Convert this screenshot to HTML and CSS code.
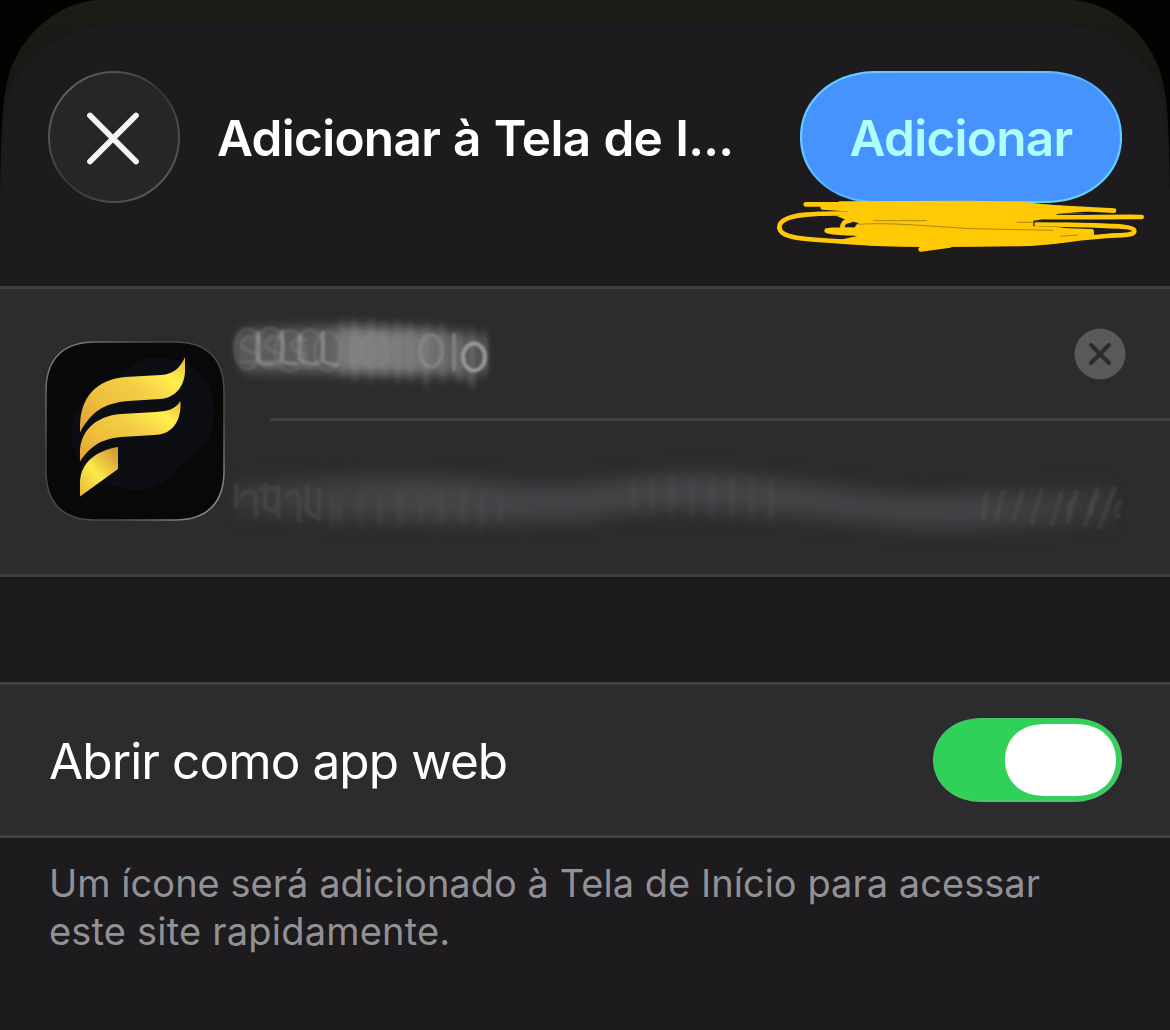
FILE: index.html
```html
<!DOCTYPE html>
<html lang="pt-BR">
<head>
<meta charset="utf-8">
<title>Adicionar à Tela de Início</title>
<link rel="stylesheet" href="styles.css">
</head>
<body>
<main class="sheet">
  <svg class="sheet-edge" viewBox="0 0 1170 200" aria-hidden="true">
    <defs>
      <linearGradient id="rim" x1="0" y1="0" x2="0" y2="1">
        <stop offset="0" stop-color="#1a1c16"/>
        <stop offset=".35" stop-color="#171a14"/>
        <stop offset="1" stop-color="#1d1b1e"/>
      </linearGradient>
      <filter id="soften" color-interpolation-filters="sRGB"><feGaussianBlur stdDeviation="1.3"/></filter>
    </defs>
    <path fill="#010300" d="M0 0H1170V200H0Z"/>
    <path fill="url(#rim)" d="M0 200C1 125 2 91 12 66C26 31 58 4 96 0H1074C1112 4 1144 31 1158 66C1168 91 1169 125 1170 200Z"/>
    <path fill="#1d1b1e" filter="url(#soften)" d="M2 230C3 130 4 92 19 74C39 47 67 28 108 24H1062C1103 28 1131 47 1151 74C1166 92 1167 130 1168 230Z"/>
  </svg>

  <header class="bar">
    <button class="close" aria-label="Fechar">
      <svg viewBox="0 0 132 132">
        <defs>
          <linearGradient id="ring" x1=".1" y1=".1" x2=".9" y2=".9">
            <stop offset="0" stop-color="#606064"/><stop offset=".35" stop-color="#454548"/>
            <stop offset=".5" stop-color="#343438"/><stop offset=".75" stop-color="#48484b"/><stop offset="1" stop-color="#5a5a5d"/>
          </linearGradient>
        </defs>
        <circle cx="66" cy="66" r="65" fill="#262528" stroke="url(#ring)" stroke-width="2"/>
        <path d="M42 44.500L88 90.500M88 44.500L42 90.500" stroke="#f5f5f7" stroke-width="5.800" stroke-linecap="round"/>
      </svg>
    </button>
    <h1 class="title">Adicionar à Tela de I...</h1>
    <button class="add">
      <svg class="add-shape" viewBox="0 0 322 132" aria-hidden="true">
        <defs>
          <linearGradient id="blueRim" x1="0" y1="0" x2="1" y2="1">
            <stop offset="0" stop-color="#65d0ff"/><stop offset=".35" stop-color="#62c9ff"/>
            <stop offset=".5" stop-color="#55abff"/><stop offset=".7" stop-color="#60caff"/><stop offset="1" stop-color="#65d5ff"/>
          </linearGradient>
        </defs>
        <path d="M78 1H244C293 1 321 32 321 66S293 131 244 131H78C29 131 1 100 1 66S29 1 78 1Z" fill="#4693fe" stroke="url(#blueRim)" stroke-width="2.200"/>
      </svg>
      <span class="add-label">Adicionar</span>
      <svg class="scribble" viewBox="0 0 380 60" aria-hidden="true">
        <g transform="translate(-4 -7) scale(.33333)" fill="none" stroke="#ffc905" stroke-width="14" stroke-linecap="round" stroke-linejoin="round">
          <path stroke="none" fill="#ffc905" d="M205 34L600 32L760 36L900 50L1000 60L860 72V80L790 92V108L870 112L960 126L930 148L850 162L750 168H440L300 166L190 154L262 138L262 116L290 104L235 92L200 78L245 70L225 60Z"/>
          <path d="M107 43H400M158 52L300 62"/>
          <path d="M300 72C150 68 28 68 28 112C28 150 120 148 300 160C400 165 600 164 750 162C860 160 900 145 1010 138C1070 134 1093 136 1093 122C1093 105 960 106 800 102"/>
          <path d="M242 91C211 94 216 116 219 129M290 102C258 103 261 114 254 130M170 122C190 115 230 120 300 120M170 122C185 130 230 128 300 134"/>
          <path d="M452 178L540 166M700 44L1032 62M780 80C910 84 1000 80 1115 81"/>
          <path d="M850 120L965 124V132L880 148"/>
        </g>
        <path transform="translate(-4 -7) scale(.33333)" d="M265 103C330 98 420 104 480 108L600 116L850 121M310 92H470M740 97H880M880 71H940M870 139L925 135" fill="none" stroke="#806914" stroke-width="2"/>
      </svg>
    </button>
  </header>

  <section class="details">
    <svg class="app-icon" viewBox="0 0 180 180" aria-hidden="true">
      <defs>
        <linearGradient id="gold" x1="0" y1="1" x2="1" y2="0">
          <stop offset="0" stop-color="#dfa032"/><stop offset=".3" stop-color="#eebe3c"/>
          <stop offset=".55" stop-color="#f3cd45"/><stop offset=".8" stop-color="#fff04d"/><stop offset="1" stop-color="#e6b735"/>
        </linearGradient>
        <linearGradient id="goldFoot" x1="0" y1="1" x2=".8" y2="0">
          <stop offset="0" stop-color="#e9b63a"/><stop offset=".5" stop-color="#fbe94a"/><stop offset="1" stop-color="#d69b36"/>
        </linearGradient>
        <linearGradient id="iconRim" x1="0" y1="0" x2="1" y2="1">
          <stop offset="0" stop-color="#88888a"/><stop offset=".3" stop-color="#48484a"/>
          <stop offset=".7" stop-color="#4a4a4c"/><stop offset="1" stop-color="#a0a0a1"/>
        </linearGradient>
      </defs>
      <path d="M50 1H130C162 1 179 18 179 50V130C179 162 162 179 130 179H50C18 179 1 162 1 130V50C1 18 18 1 50 1Z" fill="#080808" stroke="url(#iconRim)" stroke-width="1.500"/>
      <path d="M26 92C27 70 43 51 67 44C88 16 112 12 133 20C157 27 170 47 169 72C168 96 157 112 138 121C124 143 101 154 76 147C47 141 27 120 26 92Z" fill="#0d0e14"/>
      <path fill="url(#gold)" d="M35 91.500V84C36 57 50 39 80 36L116 34C129 33 135 27 140 16V31C139 46 130 57 115 58L83 60C59 62 46 71 35 91.500Z"/>
      <path fill="url(#gold)" d="M35 120.500V108C37 90 50 75 76 73L111 71C124 70 130 68 135.500 60V65C135 83 125 94 109 94L76 96C55 98 45 106 35 120.500Z"/>
      <path fill="url(#goldFoot)" d="M35 155.500V140C36 122 50 110 73 106V128Z"/>
    </svg>
    <div class="fields">
      <div class="field name-field">
        <svg class="smudge name-smudge" viewBox="0 0 290 100" aria-hidden="true">
          <defs>
            <filter id="smear" x="-20%" y="-40%" width="140%" height="180%" color-interpolation-filters="sRGB"><feGaussianBlur stdDeviation="3 6"/></filter>
            <filter id="ghost" x="-5%" y="-20%" width="110%" height="140%" color-interpolation-filters="sRGB"><feGaussianBlur stdDeviation="1.100"/></filter>
            <filter id="streak" x="-10%" y="-30%" width="120%" height="160%" color-interpolation-filters="sRGB"><feGaussianBlur stdDeviation="2.200 6"/></filter>
            <linearGradient id="nameFade"><stop offset="0" stop-color="#777" stop-opacity=".6"/><stop offset=".38" stop-color="#777" stop-opacity=".7"/><stop offset=".46" stop-color="#8a8a8a" stop-opacity=".9"/><stop offset=".75" stop-color="#888" stop-opacity=".8"/><stop offset="1" stop-color="#777" stop-opacity=".45"/></linearGradient>
          </defs>
          <path d="M15 28Q17 18 40 18L120 15L210 18L262 24Q269 28 268 58L252 69L230 64L30 61Q14 61 15 28Z" fill="url(#nameFade)" filter="url(#smear)"/>
          <path d="M122 12V64M134 10V67M151 10V68M164 14V66M178 12V69M190 14V68M206 16V75M222 15V68M239 22V68M252 20V77M265 23V64" fill="none" stroke="#8b8b8b" stroke-opacity=".3" stroke-width="5" filter="url(#streak)"/>
          <g fill="none" stroke="#a0a0a0" stroke-opacity=".18" stroke-width="4" filter="url(#ghost)">
            <ellipse cx="28" cy="38" rx="13" ry="20"/><ellipse cx="50" cy="37" rx="14" ry="20"/><ellipse cx="70" cy="40" rx="15" ry="20"/><ellipse cx="90" cy="38" rx="13" ry="19"/><ellipse cx="108" cy="40" rx="13" ry="19"/>
            <path d="M41 29Q30 22 23 30C16 42 39 38 37 48Q33 54 20 50M65 29Q54 22 47 30C40 42 63 38 61 48Q55 54 44 50M88 29Q75 25 72 33C69 43 88 39 86 48"/>
            <path d="M38 20V49Q44 55 54 52M62 19V50Q68 53 78 53M80 23V48Q86 54 98 52M103 20V50Q110 54 119 54" stroke-opacity=".5"/>
            <ellipse cx="155" cy="39" rx="14" ry="17" stroke-opacity=".12"/><ellipse cx="211" cy="40" rx="11" ry="16" stroke-opacity=".35"/>
            <path d="M234 22V60" stroke-opacity=".5"/><ellipse cx="254" cy="46" rx="11" ry="13.500" stroke-opacity=".9"/>
          </g>
        </svg>
        <button class="clear" aria-label="Limpar">
          <svg viewBox="0 0 52 52"><circle cx="26" cy="26" r="25.500" fill="#59595c"/><path d="M17 17L35 35M35 17L17 35" stroke="#2c2c2e" stroke-width="4" stroke-linecap="round"/></svg>
        </button>
      </div>
      <div class="field url-field">
        <svg class="smudge url-smudge" viewBox="0 0 920 110" aria-hidden="true">
          <defs><linearGradient id="urlFade"><stop offset="0" stop-color="#4c4c4e" stop-opacity=".4"/><stop offset=".2" stop-color="#4b4b4e" stop-opacity=".8"/><stop offset=".85" stop-color="#4b4b4e" stop-opacity=".75"/><stop offset="1" stop-color="#4b4b4e" stop-opacity=".3"/></linearGradient>
          <filter id="urlBlur" x="-5%" y="-40%" width="110%" height="180%" color-interpolation-filters="sRGB"><feGaussianBlur stdDeviation="5 9"/></filter></defs>
          <path d="M16 34C120 26 210 25 280 33C370 43 430 20 500 24C570 30 640 42 700 46L895 38V71C820 77 740 78 690 77C570 65 440 50 370 69C250 75 150 69 16 63Z" fill="url(#urlFade)" filter="url(#urlBlur)"/>
          <g fill="none" stroke="#59595c" stroke-opacity=".35" stroke-width="5" filter="url(#ghost)">
            <path d="M16 33V58M20 48Q31 34 36 47V68M45 33V57Q51 64 57 58M38 39H55M58 35V68M65 47Q75 35 79 48V72M87 35V59Q91 68 100 65M99 38V71"/>
            <path d="M767 42L763 71M784 40L776 71M803 40L793 72M822 39L811 75M842 42L831 76M857 40L847 74M878 37L864 77M895 36L879 79" stroke-opacity=".3"/>
            <path d="M855 49Q845 55 851 64M879 44Q869 52 872 67M902 51Q892 58 899 68" stroke-opacity=".3"/>
          </g>
          <path d="M112 44V77M119 48V73M140 43V72M160 45V74M180 43V75M201 45V72M222 42V73M243 41V73M262 45V79M281 44V72M414 30V61M432 28V63M452 27V62M472 29V65M492 29V66M512 29V69M532 31V69M551 32V71" fill="none" stroke="#59595c" stroke-opacity=".3" stroke-width="5" filter="url(#streak)"/>
        </svg>
      </div>
    </div>
  </section>

  <section class="option">
    <span class="option-label">Abrir como app web</span>
    <span class="switch" role="switch" aria-checked="true" aria-label="Abrir como app web">
      <svg viewBox="0 0 189 84"><path d="M49 0H140C171 0 189 20 189 42S171 84 140 84H49C18 84 0 64 0 42S18 0 49 0Z" fill="#4bc668"/><path d="M49 1H139C169 1 187 20 187 42S169 82 139 82H49C19 82 1 64 1 42S19 1 49 1Z" fill="#2fd158"/><path d="M112 6H143C168 6 183 21 183 42S168 78 143 78H112C87 78 72 63 72 42S87 6 112 6Z" fill="#fff"/></svg>
    </span>
  </section>
  <p class="hint"><span class="hint-first">Um ícone será adicionado à Tela de Início para acessar</span><br><span>este site rapidamente.</span></p>
</main>
</body>
</html>
```
FILE: styles.css
```css
* { box-sizing: border-box; }
body { margin: 0; background: #1d1b1e; color: #fff; font-family: Inter, "Liberation Sans", sans-serif; }
button { padding: 0; border: 0; background: none; color: inherit; font: inherit; }
svg { display: block; }
.sheet { position: relative; isolation: isolate; display: flex; flex-direction: column; width: 1170px; height: 1030px; overflow: hidden; background: #1d1b1e; }
.sheet-edge { position: absolute; z-index: -1; top: 0; left: 0; width: 1170px; height: 200px; }
.bar { display: flex; flex: none; align-items: flex-start; height: 286px; padding: 71px 48px 0; }
.close { flex: none; width: 132px; height: 132px; }
.title { flex: 1; margin: 0 0 0 37px; font-size: 49.5px; font-weight: 600; line-height: 134px; letter-spacing: -0.7px; word-spacing: 1.2px; white-space: nowrap; }
.add { position: relative; flex: none; width: 322px; height: 132px; }
.add-shape { position: absolute; inset: 0; }
.add-label { position: relative; display: block; color: #b0ffff; font-size: 49.5px; font-weight: 600; line-height: 134px; letter-spacing: -0.7px; }
.scribble { position: absolute; top: 126px; left: -26px; width: 380px; height: 60px; }
.details { display: flex; flex: none; height: 291px; padding-left: 45px; border-top: 3px solid #3f3f41; border-bottom: 3px solid #3f3f41; background: #2c2c2e; }
.app-icon { flex: none; width: 180px; height: 180px; margin-top: 52px; }
.fields { flex: 1; margin-left: 45px; }
.name-field { display: flex; justify-content: space-between; height: 132px; padding-right: 44px; border-bottom: 3px solid #3f3f41; }
.smudge { margin-left: -50px; }
.name-smudge { width: 290px; height: 100px; margin-top: 22px; }
.clear { width: 52px; height: 52px; margin-top: 39px; }
.url-smudge { width: 920px; height: 110px; margin-top: 29px; }
.option { display: flex; flex: none; align-items: center; justify-content: space-between; height: 156px; margin-top: 105px; padding: 0 48px 0 49px; border-top: 3px solid #3f3f41; border-bottom: 3px solid #3f3f41; background: #2c2c2e; }
.option-label { padding-top: 2px; font-size: 49.5px; line-height: 60px; letter-spacing: -0.9px; white-space: nowrap; }
.switch { width: 189px; height: 84px; }
.hint { margin: 21px 0 0 49px; color: #929196; font-size: 38px; line-height: 48px; letter-spacing: 0.2px; white-space: nowrap; }
.hint-first { letter-spacing: 0.03px; }
```
